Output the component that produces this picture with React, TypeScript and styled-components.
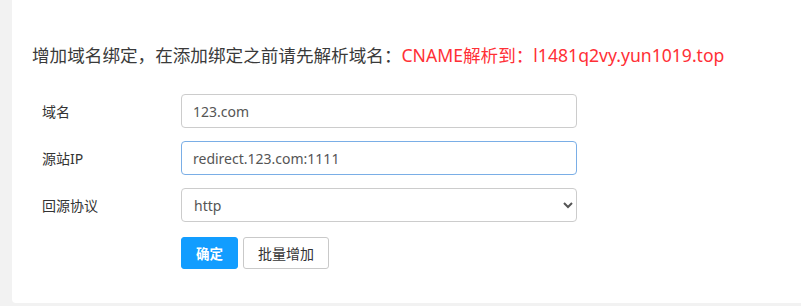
import styled, { createGlobalStyle } from "styled-components";

const Global = createGlobalStyle`
  html, body {
    margin: 0;
    padding: 0;
    background: #f2f2f2;
    font-family: "Noto Sans", "Noto Sans CJK SC", sans-serif;
  }
`;

const Page = styled.div`
  width: 801px;
  height: 306px;
  display: flex;
  flex-direction: column;
`;

const Panel = styled.div`
  margin-left: 12px;
  height: 303px;
  background: #fff;
  border-bottom-left-radius: 4px;
  padding: 42px 0 0 20px;
  box-sizing: border-box;
  display: flex;
  flex-direction: column;
`;

const Title = styled.div`
  font-size: 17.6px;
  line-height: 26px;
  color: #3a3a3a;
  margin-bottom: 26px;
  white-space: nowrap;
`;

const Red = styled.span`
  color: #ff3036;
`;

const Form = styled.div`
  display: flex;
  flex-direction: column;
  gap: 13px;
  padding-left: 10px;
`;

const Row = styled.div`
  display: flex;
  align-items: center;
`;

const Label = styled.label`
  width: 139px;
  font-size: 14px;
  color: #333;
`;

const Input = styled.input<{ $active?: boolean }>`
  width: 396px;
  height: 34px;
  box-sizing: border-box;
  border: 1px solid ${(p) => (p.$active ? "#7aaee6" : "#ccc")};
  border-radius: 4px;
  padding: 0 11px;
  font-family: "Noto Sans", "Noto Sans CJK SC", sans-serif;
  font-size: 14px;
  color: #555;
  outline: none;
  background: #fff;
`;

const Select = styled.select`
  width: 396px;
  height: 34px;
  box-sizing: border-box;
  border: 1px solid #ccc;
  border-radius: 4px;
  padding: 0 8px;
  font-family: "Noto Sans", "Noto Sans CJK SC", sans-serif;
  font-size: 14px;
  color: #555;
  background: #fff;
  outline: none;
`;

const Actions = styled.div`
  display: flex;
  gap: 5px;
  padding-left: 139px;
  margin-top: 2px;
`;

const Button = styled.button<{ $primary?: boolean }>`
  height: 32px;
  padding: 0 14px;
  border-radius: 3px;
  font-family: "Noto Sans", "Noto Sans CJK SC", sans-serif;
  font-size: ${(p) => (p.$primary ? "13.5px" : "14px")};
  font-weight: ${(p) => (p.$primary ? 700 : 400)};
  color: ${(p) => (p.$primary ? "#fff" : "#333")};
  background: ${(p) => (p.$primary ? "#129dff" : "#fff")};
  border: 1px solid ${(p) => (p.$primary ? "#129dff" : "#c9c9c9")};
  cursor: pointer;
`;

export default function App() {
  return (
    <Page>
      <Global />
      <Panel>
        <Title>
          增加域名绑定，在添加绑定之前请先解析域名：
          <Red>CNAME解析到：l1481q2vy.yun1019.top</Red>
        </Title>
        <Form>
          <Row>
            <Label>域名</Label>
            <Input defaultValue="123.com" />
          </Row>
          <Row>
            <Label>源站IP</Label>
            <Input $active autoFocus defaultValue="redirect.123.com:1111" />
          </Row>
          <Row>
            <Label>回源协议</Label>
            <Select defaultValue="http">
              <option value="http">http</option>
              <option value="https">https</option>
            </Select>
          </Row>
          <Actions>
            <Button $primary>确定</Button>
            <Button>批量增加</Button>
          </Actions>
        </Form>
      </Panel>
    </Page>
  );
}
